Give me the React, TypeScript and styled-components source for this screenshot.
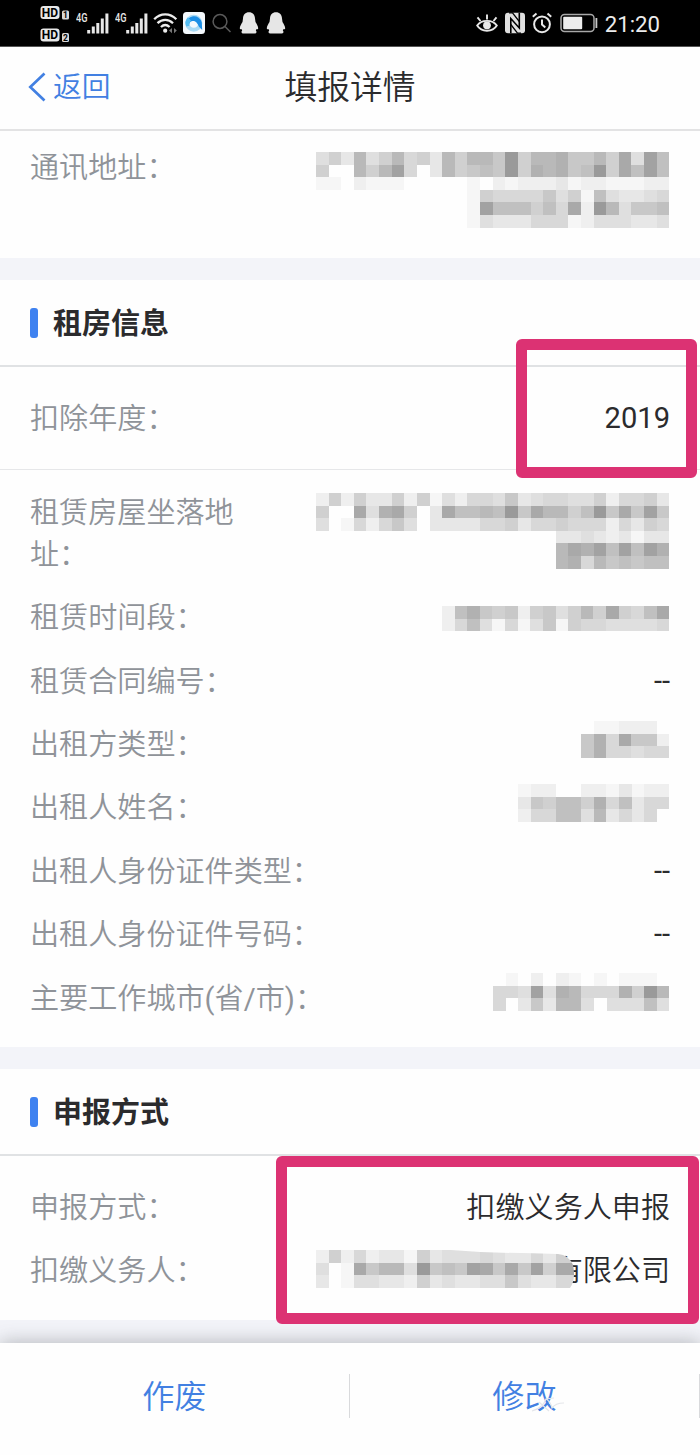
import React from 'react';
import styled, { createGlobalStyle } from 'styled-components';

const GlobalStyle = createGlobalStyle`
  * { box-sizing: border-box; }
  body {
    margin: 0;
    background: #fefefe;
    font-family: Roboto, "Noto Sans CJK SC", sans-serif;
    color: #2b2b2d;
  }
`;

const Page = styled.div`
  width: 700px;
  height: 1455px;
  display: flex;
  flex-direction: column;
  overflow: hidden;
  background: #fefefe;
`;

const StatusBar = styled.header`
  height: 47px;
  flex: none;
  display: flex;
  justify-content: space-between;
  padding: 0 40px;
  background: #000;
  border-bottom: 1px solid #555;
  color: #ececec;
`;

const StatusGroup = styled.div`
  display: flex;
  height: 46px;
  align-items: center;
`;

const StatusIcon = styled.svg<{ $gap?: number }>`
  display: block;
  flex: none;
  margin-left: ${(p) => p.$gap ?? 0}px;
`;

const Clock = styled.span`
  margin-left: 7px;
  font-size: 22.2px;
  line-height: 46px;
  padding-top: 1px;
`;

const NavBar = styled.nav`
  height: 84px;
  flex: none;
  display: grid;
  grid-template-columns: 1fr auto 1fr;
  align-items: center;
  padding: 0 28px 2px;
  border-bottom: 2px solid #e3e3e4;
`;

const BackLink = styled.a`
  display: flex;
  align-items: center;
  gap: 7px;
  color: #4280e2;
  font-size: 28.8px;
  font-weight: 350;
  line-height: 40px;
`;

const NavTitle = styled.h1`
  margin: 0;
  padding-top: 2px;
  font-size: 32.8px;
  font-weight: 350;
  line-height: 44px;
`;

const Section = styled.section<{ $height: number }>`
  position: relative;
  flex: none;
  height: ${(p) => p.$height}px;
`;

const Gap = styled.div<{ $height: number }>`
  flex: none;
  height: ${(p) => p.$height}px;
  background: #f3f4f9;
`;

const SectionTitle = styled.h2`
  height: 87px;
  margin: 0;
  padding: 0 30px;
  display: flex;
  align-items: center;
  gap: 15px;
  border-bottom: 2px solid #e0e2e4;
  font-size: 29px;
  font-weight: 700;
  line-height: 40px;
  &::before {
    content: "";
    width: 8px;
    height: 30px;
    border-radius: 3px;
    background: #3f82f0;
  }
`;

const TitleText = styled.span`
  padding-top: 2px;
`;

const Rows = styled.div<{ $top: number; $bottom?: number; $divided?: boolean }>`
  display: flex;
  flex-direction: column;
  gap: 22px;
  padding: ${(p) => p.$top}px 30px ${(p) => p.$bottom ?? 0}px;
  border-bottom: ${(p) => (p.$divided ? '1px solid #e6e7e9' : 'none')};
`;

const Row = styled.div`
  position: relative;
  display: flex;
  justify-content: space-between;
  align-items: flex-start;
  font-size: 29.1px;
  line-height: 41.4px;
`;

const Label = styled.span<{ $narrow?: boolean }>`
  color: #8f9399;
  font-weight: 350;
  white-space: ${(p) => (p.$narrow ? 'normal' : 'nowrap')};
  width: ${(p) => (p.$narrow ? '210px' : 'auto')};
`;

const Latin = styled.span`
  font-weight: 400;
`;

const Value = styled.span<{ $latin?: boolean }>`
  white-space: nowrap;
  font-weight: ${(p) => (p.$latin ? 400 : 350)};
  margin-top: ${(p) => (p.$latin ? '-1px' : '0')};
`;

const Cover = styled.svg<{ $top: number; $right: number }>`
  position: absolute;
  top: ${(p) => p.$top}px;
  right: ${(p) => p.$right}px;
`;

const Highlight = styled.div<{ $x: number; $y: number; $w: number; $h: number }>`
  position: absolute;
  z-index: 2;
  left: ${(p) => p.$x}px;
  top: ${(p) => p.$y}px;
  width: ${(p) => p.$w}px;
  height: ${(p) => p.$h}px;
  border: 11.5px solid #dc3273;
  border-radius: 6px;
`;

const Footer = styled.footer`
  position: relative;
  flex: 1;
  display: flex;
  align-items: flex-start;
  padding-top: 31px;
  background: #fefefe;
  box-shadow: 0 -1px 18px rgba(70, 75, 80, 0.36);
`;

const Action = styled.button`
  position: relative;
  flex: 1;
  height: 44px;
  padding: 1px 0 0;
  border: 0;
  border-right: 1px solid #d9dadc;
  background: none;
  color: #4280e2;
  font: inherit;
  font-size: 32.2px;
  font-weight: 350;
  line-height: 42px;
`;

const Scribble = styled.svg`
  position: absolute;
  left: 180px;
  top: 20px;
`;

const CELL = 12.62;

/* Each hex digit is the darkness of one mosaic cell. */
function Mosaic({ rows, top, right = 0.8, clip }: { rows: string[]; top: number; right?: number; clip?: string }) {
  const width = Math.max(...rows.map((r) => r.length)) * CELL;
  const height = rows.length * CELL;
  return (
    <Cover $top={top} $right={right} width={width} height={height} viewBox={`0 0 ${width} ${height}`}>
      <g style={clip ? { clipPath: `path("${clip}")` } : undefined} shapeRendering="crispEdges">
        {rows.flatMap((r, y) =>
          [...r].map((c, x) => {
            if (c === '.') return null;
            const v = Math.round(254 - parseInt(c, 16) * 7.7);
            return (
              <rect key={`${x}-${y}`} x={x * CELL} y={y * CELL} width={CELL} height={CELL} fill={`rgb(${v},${v},${v})`} />
            );
          }),
        )}
      </g>
    </Cover>
  );
}

const ADDRESS = [
  '463946956396997D699A7796B4C8',
  '600969C50396787D6A9A78D6B8C8',
  '1102111000001021222312211122',
  '............1655557461843345',
  '............1C888685B2D94778',
  '............1433355512444334',
];
const HOUSE = [
  '2626336261425547345544625563',
  '600B4AB603B8898D7B9968D7B7C7',
  '4015257403333556355655525365',
  '...................334323133',
  '...................9BAC8C8CA',
  '...................9A5978788',
];
const PERIOD = ['28A7672674696B658B', '258415147165544445'];
const LESSOR_TYPE = ['.112220', '7A5B772', '7A55455'];
const LESSOR_NAME = ['122002213122', '376886A58355', '255884935350'];
const CITY = ['01020210101110', '554C4A9555A6D9', '50373994044484'];
const COMPANY = ['262523316344454335366', '401B7994D787CB7B7C6BB', '301443326343344743355'];

function SimBadge({ y, n }: { y: number; n: string }) {
  return (
    <g transform={`translate(0 ${y})`}>
      <rect x="0.5" y="0.5" width="19" height="13" rx="3" fill="#e8e8e8" />
      <text x="10" y="11.3" textAnchor="middle" fontSize="12" fontWeight="700" fill="#000">HD</text>
      <rect x="22" y="5" width="7" height="9" rx="1.5" fill="#d8d8d8" />
      <text x="25.5" y="12.6" textAnchor="middle" fontSize="8.5" fontWeight="700" fill="#000">{n}</text>
    </g>
  );
}

function Signal({ gap }: { gap: number }) {
  return (
    <StatusIcon $gap={gap} width="33" height="46" viewBox="0 0 33 46" fill="#e8e8e8">
      <text x="0" y="22" fontSize="12" fontWeight="500" textLength="11.5" lengthAdjust="spacingAndGlyphs">4G</text>
      <rect x="11.2" y="30" width="3" height="3.5" />
      <rect x="15.8" y="26.5" width="3" height="7" />
      <rect x="20.3" y="23" width="3" height="10.5" />
      <rect x="24.8" y="18.5" width="3" height="15" />
      <rect x="29.4" y="13.5" width="3" height="20" />
    </StatusIcon>
  );
}

function Penguin({ gap }: { gap: number }) {
  return (
    <StatusIcon $gap={gap} width="20" height="22" viewBox="0 0 20 22">
      <path
        fill="#e6e6e6"
        d="M10 .3C6.3.3 4.2 2.8 4 6.5L3.500 10C2.300 12 .8 14.500.8 16.200c0 1.100.7 1.500 1.600.7l.8 1.600c-1.400 1.200-.7 3 1.200 3h11.200c1.900 0 2.600-1.800 1.200-3l.8-1.600c.9.800 1.600.4 1.600-.7 0-1.700-1.500-4.200-2.700-6.200L16 6.500C15.800 2.800 13.700.3 10 .3Z"
      />
    </StatusIcon>
  );
}

function StatusLeft() {
  return (
    <StatusGroup>
      <StatusIcon width="30" height="46" viewBox="0 0 30 46">
        <SimBadge y={5.5} n="1" />
        <SimBadge y={28} n="2" />
      </StatusIcon>
      <Signal gap={6} />
      <Signal gap={6} />
      <StatusIcon $gap={5} width="25" height="46" viewBox="0 0 25 46" fill="none" stroke="#ececec" strokeWidth="2.3">
        <path d="M1.2 19.3C7.5 12.8 17 12.8 23.3 19.3" />
        <path d="M4.5 23.2c4.600-4.400 11-4.400 15.500 0" />
        <path d="M7.9 27c2.700-2.400 6-2.400 8.700 0" />
        <circle cx="12.2" cy="30.7" r="2.1" fill="#ececec" stroke="none" />
        <path d="m19 28-3 2.6 3 2.6ZM21 28l2.800 2.6-2.800 2.6Z" fill="#777" stroke="none" />
      </StatusIcon>
      <StatusIcon $gap={5} width="22" height="22" viewBox="0 0 22 22">
        <rect width="22" height="22" rx="3.5" fill="#f4f9fd" />
        <circle cx="10.8" cy="11.3" r="6.5" fill="none" stroke="#a9daf5" strokeWidth="4" />
        <path d="M3 12.5A8 8 0 0 1 18.800 10.500L19.200 18 16 14.800C14.300 10 11.500 8.500 9.500 9 7 9.500 6 11 6 14Z" fill="#1d8fe6" />
        <path d="M3.2 14.5A8.300 8.300 0 0 1 5 5.300L8 8.800c-1.700 1.500-1.900 3.200-1.700 5Z" fill="#54bdf2" />
      </StatusIcon>
      <StatusIcon $gap={7} width="20" height="20" viewBox="0 0 20 20" fill="none" stroke="#5a5a5a" strokeWidth="1.5">
        <circle cx="8" cy="8.5" r="6.9" />
        <path d="m13 13.5 5.500 5.500" />
      </StatusIcon>
      <Penguin gap={7} />
      <Penguin gap={7} />
    </StatusGroup>
  );
}

function StatusRight() {
  return (
    <StatusGroup>
      <StatusIcon width="22" height="22" viewBox="0 0 22 22" fill="none" stroke="#e8e8e8" strokeWidth="1.9">
        <path d="M1.2 13.5C5.500 7.300 16.500 7.300 20.800 13.500 16.500 20.500 5.500 20.500 1.200 13.500Z" />
        <path d="M11 2.5v5M4.500 9 1.500 5.300M17.500 9l3-3.700" />
        <circle cx="11" cy="13.3" r="3.9" fill="#e8e8e8" stroke="none" />
      </StatusIcon>
      <StatusIcon $gap={7} width="20" height="22" viewBox="0 0 20 22">
        <rect y="0.8" width="20" height="20.4" rx="3" fill="#e0e0e0" />
        <path d="M5.8 21.2V6.500L14.300 16V.8" fill="none" stroke="#000" strokeWidth="1.6" />
        <path d="M4 .8h3.500L14.300 9.500M5.800 12.500 12.500 21.200H16" fill="none" stroke="#000" strokeWidth="1.3" />
      </StatusIcon>
      <StatusIcon $gap={7} width="20" height="22" viewBox="0 0 20 22" fill="none" stroke="#e8e8e8" strokeWidth="2">
        <circle cx="10" cy="12.3" r="7.9" />
        <path d="M10 7.5v5l3.300 3M.8 4.800 4.500 1.500M19.200 4.800 15.500 1.500" />
      </StatusIcon>
      <StatusIcon $gap={8} width="38" height="20" viewBox="0 0 38 20">
        <rect x="1" y="1.5" width="33" height="17" rx="3.5" fill="none" stroke="#a8a8a8" strokeWidth="1.5" />
        <rect x="3.2" y="3.8" width="19" height="12.4" rx="1" fill="#ececec" />
        <rect x="35.5" y="5" width="1.8" height="10" fill="#c8c8c8" />
      </StatusIcon>
      <Clock>21:20</Clock>
    </StatusGroup>
  );
}

function App() {
  return (
    <>
      <GlobalStyle />
      <Page>
        <StatusBar>
          <StatusLeft />
          <StatusRight />
        </StatusBar>
        <NavBar>
          <BackLink>
            <svg width="18" height="30" viewBox="0 0 18 30" fill="none" stroke="#4280e2" strokeWidth="2.7">
              <path d="M16.5 1.5 2.300 15l14.200 13.500" />
            </svg>
            返回
          </BackLink>
          <NavTitle>填报详情</NavTitle>
        </NavBar>

        <Section $height={127}>
          <Rows $top={17}>
            <Row>
              <Label>通讯地址：</Label>
              <Mosaic rows={ADDRESS} top={4} />
            </Row>
          </Rows>
        </Section>
        <Gap $height={22} />

        <Section $height={767}>
          <SectionTitle><TitleText>租房信息</TitleText></SectionTitle>
          <Rows $top={31.5} $bottom={29.5} $divided>
            <Row>
              <Label>扣除年度：</Label>
              <Value $latin>2019</Value>
            </Row>
          </Rows>
          <Rows $top={23}>
            <Row>
              <Label $narrow>租赁房屋坐落地址：</Label>
              <Mosaic rows={HOUSE} top={0} />
            </Row>
            <Row>
              <Label>租赁时间段：</Label>
              <Mosaic rows={PERIOD} top={8} />
            </Row>
            <Row>
              <Label>租赁合同编号：</Label>
              <Value $latin>--</Value>
            </Row>
            <Row>
              <Label>出租方类型：</Label>
              <Mosaic rows={LESSOR_TYPE} top={-4.5} />
            </Row>
            <Row>
              <Label>出租人姓名：</Label>
              <Mosaic rows={LESSOR_NAME} top={-4.5} />
            </Row>
            <Row>
              <Label>出租人身份证件类型：</Label>
              <Value $latin>--</Value>
            </Row>
            <Row>
              <Label>出租人身份证件号码：</Label>
              <Value $latin>--</Value>
            </Row>
            <Row>
              <Label>
                主要工作城市<Latin>(</Latin>省<Latin>/</Latin>市<Latin>)</Latin>：
              </Label>
              <Mosaic rows={CITY} top={-6} />
            </Row>
          </Rows>
          <Highlight $x={516} $y={59} $w={181} $h={139} />
        </Section>
        <Gap $height={22} />

        <Section $height={251}>
          <SectionTitle><TitleText>申报方式</TitleText></SectionTitle>
          <Rows $top={32}>
            <Row>
              <Label>申报方式：</Label>
              <Value>扣缴义务人申报</Value>
            </Row>
            <Row>
              <Label>扣缴义务人：</Label>
              <Value>有限公司</Value>
              <Mosaic
                rows={COMPANY}
                top={-1}
                right={89.4}
                clip="M0 0H135C170 3 205 3 242 4Q253 5 257 15Q260 30 254 37.900H0Z"
              />
            </Row>
          </Rows>
          <Highlight $x={276} $y={87} $w={423} $h={168} />
        </Section>
        <Gap $height={23} />

        <Footer>
          <Action>作废</Action>
          <Action>
            修改
            <Scribble width="36" height="20" viewBox="0 0 36 20" fill="none" stroke="#e4e6ea" strokeWidth="1.2">
              <path d="M2 17c7-2 12-6 14-12 4 2 5 5 6 9 2-3 6-5 12-5M9 8l10 9M16 5l8-1" />
            </Scribble>
          </Action>
        </Footer>
      </Page>
    </>
  );
}

export default App;
